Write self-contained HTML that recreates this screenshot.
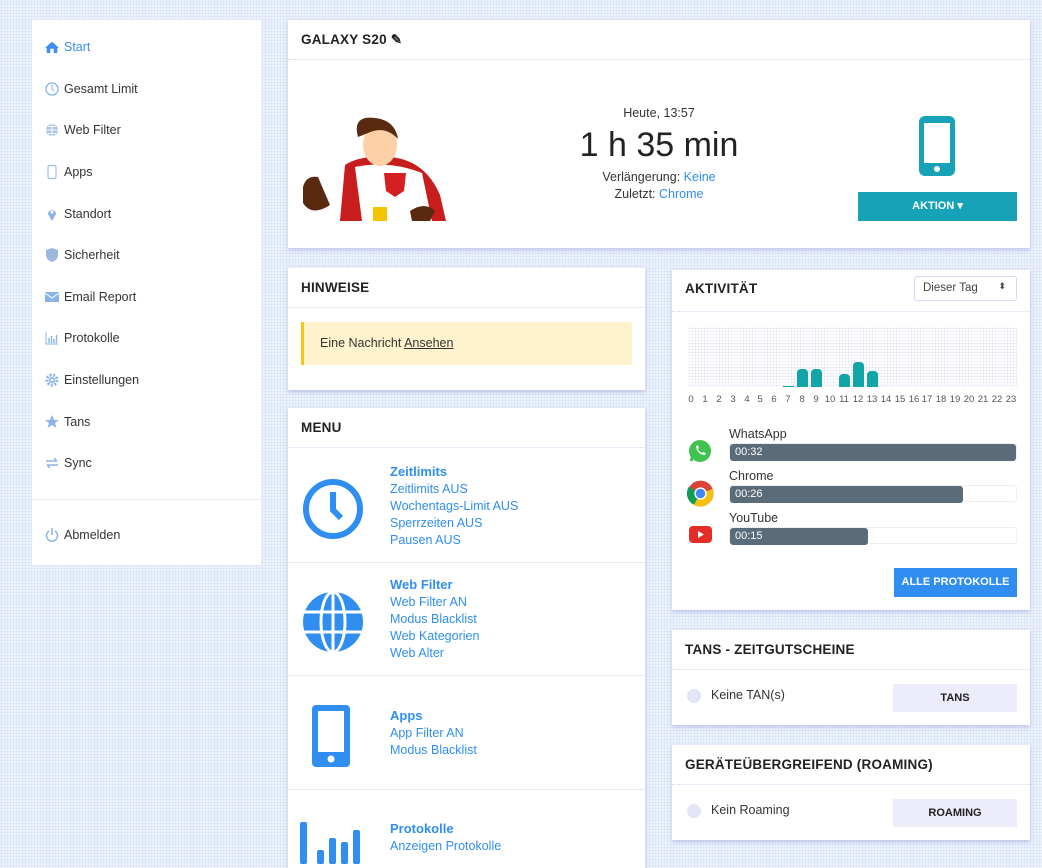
<!DOCTYPE html>
<html><head><meta charset="utf-8"><style>
*{box-sizing:border-box;margin:0;padding:0}
body{width:1042px;height:861px;overflow:hidden;position:relative;font-family:"Liberation Sans",sans-serif;background:#edf2fb;background-image:radial-gradient(#d5e1f7 0.8px,transparent 0.9px);background-size:3px 3px;color:#333}
.card{position:absolute;background:#fff;box-shadow:0 2px 4px rgba(120,120,200,.35)}
.hd{height:40px;border-bottom:1px dotted #d6d6ee;font-weight:bold;font-size:13.5px;letter-spacing:.2px;color:#222;padding:12px 13px}
.side{position:absolute;left:32px;top:20px;width:229px;height:545px;background:#fff}
.si{position:absolute;left:13px;font-size:12.5px;color:#333;display:flex;align-items:center;gap:5px}
.si svg{width:14px;height:14px}
a{color:#2f8ef0;text-decoration:none}
.btn{position:absolute;color:#fff;font-weight:bold;font-size:11px;text-align:center}
.mi{position:absolute;left:102px;font-size:12.5px;line-height:17px;color:#2f8ef0}
.mi b{font-size:13px}
.bar{position:absolute;background:#12a5a8;border-radius:4px 4px 0 0;width:11px}
.lbl{position:absolute;top:394px;font-size:9.5px;color:#555;width:14px;text-align:center}
.pb{position:absolute;left:729px;width:288px;height:17px;border:1px dotted #ddd;border-radius:3px}
.pb div{height:17px;background:#5a6c7a;border-radius:3px;color:#fff;font-size:11px;padding:2px 5px}
.an{position:absolute;left:729px;font-size:12.5px;color:#333}
.dot{position:absolute;width:14px;height:14px;border-radius:50%;background:#e4e4f8}
.gb{position:absolute;left:893px;width:124px;height:28px;background:#ececfb;font-size:11px;font-weight:bold;color:#222;text-align:center;line-height:28px}
</style></head><body>
<div class="side">
<div class="si" style="top:20px;color:#3d8ef0"><svg viewBox="0 0 16 14"><path d="M8 1L0 8h2v6h4V9h4v5h4V8h2z" fill="#3d8ef0"/></svg>Start</div>
<div class="si" style="top:62px"><svg viewBox="0 0 14 14"><circle cx="7" cy="7" r="6" fill="none" stroke="#8ab4e8" stroke-width="1.3"/><path d="M7 3v4l2 2" stroke="#8ab4e8" fill="none"/></svg>Gesamt Limit</div>
<div class="si" style="top:103px"><svg viewBox="0 0 14 14"><circle cx="7" cy="7" r="6" fill="#a9c4ea"/><path d="M1 7h12M7 1v12M3 3.5h8M3 10.5h8" stroke="#fff"/></svg>Web Filter</div>
<div class="si" style="top:145px"><svg viewBox="0 0 14 14"><rect x="3" y="0.5" width="8" height="13" rx="1.5" fill="none" stroke="#8ab4e8"/></svg>Apps</div>
<div class="si" style="top:187px"><svg viewBox="0 0 14 14"><path d="M7 14L3 7a4 4 0 118 0z" fill="#8ab4e8"/><circle cx="7" cy="5" r="1.5" fill="#fff"/></svg>Standort</div>
<div class="si" style="top:228px"><svg viewBox="0 0 14 14"><path d="M7 0L1 2v5c0 4 3 6 6 7 3-1 6-3 6-7V2z" fill="#9ab8e0"/></svg>Sicherheit</div>
<div class="si" style="top:270px"><svg viewBox="0 0 14 14"><rect x="0" y="2" width="14" height="10" fill="#8ab4e8"/><path d="M0 3l7 5 7-5" stroke="#fff" fill="none"/></svg>Email Report</div>
<div class="si" style="top:311px"><svg viewBox="0 0 14 14"><path d="M1 1v12h12" stroke="#8ab4e8" fill="none"/><path d="M4 12V7M6.5 12V5M9 12V8M11.5 12V4" stroke="#8ab4e8" stroke-width="1.4"/></svg>Protokolle</div>
<div class="si" style="top:353px"><svg viewBox="0 0 14 14"><circle cx="7" cy="7" r="5" fill="none" stroke="#8ab4e8" stroke-width="3" stroke-dasharray="2 1.5"/><circle cx="7" cy="7" r="3" fill="#8ab4e8"/><circle cx="7" cy="7" r="1.3" fill="#fff"/></svg>Einstellungen</div>
<div class="si" style="top:395px"><svg viewBox="0 0 14 14"><path d="M7 0l2 5h5l-4 3 1.5 5L7 10l-4.5 3L4 8 0 5h5z" fill="#8ab4e8"/></svg>Tans</div>
<div class="si" style="top:436px"><svg viewBox="0 0 14 14"><path d="M1 5h11M9 2l3 3M13 9H2M5 12L2 9" stroke="#8ab4e8" stroke-width="1.4" fill="none"/></svg>Sync</div>
<div style="position:absolute;left:0;right:0;top:479px;border-top:1px dotted #d6d6ee"></div>
<div class="si" style="top:508px"><svg viewBox="0 0 14 14"><path d="M4 3a5.5 5.5 0 106 0" stroke="#8ab4e8" stroke-width="1.5" fill="none"/><path d="M7 0v7" stroke="#8ab4e8" stroke-width="1.5"/></svg>Abmelden</div>
</div>

<div class="card" style="left:288px;top:20px;width:742px;height:228px">
<div class="hd">GALAXY S20 ✎</div>
<svg style="position:absolute;left:12px;top:95px" width="146" height="106" viewBox="0 0 146 106">
<path d="M45 50 Q60 40 90 42 Q125 45 140 80 L146 106 L40 106 Z" fill="#c81d1d"/>
<path d="M55 52 Q90 45 122 58 L132 106 L62 106 Z" fill="#fff"/>
<path d="M84 58 L106 58 L104 76 L95 82 L86 76Z" fill="#d42020"/>
<rect x="73" y="92" width="14" height="14" fill="#f5c400"/>
<ellipse cx="80" cy="30" rx="17" ry="21" fill="#fdd0a8"/>
<path d="M58 22 Q52 0 75 3 Q95 5 98 24 Q85 10 68 18 Z" fill="#5a2a10"/>
<path d="M3 72 Q6 60 18 62 L30 90 Q12 102 3 88Z" fill="#5a2a10"/>
<path d="M110 96 Q125 86 135 96 L130 106 L112 106Z" fill="#5a2a10"/>
</svg>
<div style="position:absolute;left:0;right:0;top:86px;text-align:center;font-size:12.5px;color:#333">Heute, 13:57</div>
<div style="position:absolute;left:0;right:0;top:106px;text-align:center;font-size:34px;color:#222">1 h 35 min</div>
<div style="position:absolute;left:0;right:0;top:149px;text-align:center;font-size:12.5px;line-height:17px;color:#333">Verlängerung: <a>Keine</a><br>Zuletzt: <a>Chrome</a></div>
<svg style="position:absolute;left:629px;top:94px" width="40" height="64" viewBox="0 0 40 64"><rect x="2" y="2" width="36" height="60" rx="6" fill="#17a2b8"/><rect x="7" y="9" width="26" height="40" fill="#fff"/><circle cx="20" cy="55" r="3" fill="#fff"/></svg>
<div class="btn" style="left:570px;top:172px;width:159px;height:29px;background:#17a2b8;line-height:29px">AKTION ▾</div>
</div>

<div class="card" style="left:288px;top:268px;width:357px;height:122px">
<div class="hd">HINWEISE</div>
<div style="position:absolute;left:13px;top:54px;width:331px;height:43px;background:#fff3cd;border-left:3px solid #f5c518;font-size:12.5px;padding:14px 16px;color:#333">Eine Nachricht <u>Ansehen</u></div>
</div>

<div class="card" style="left:288px;top:408px;width:357px;height:460px">
<div class="hd">MENU</div>
<svg style="position:absolute;left:14px;top:70px" width="62" height="62" viewBox="0 0 62 62"><circle cx="31" cy="31" r="27" fill="none" stroke="#2f8ef0" stroke-width="6"/><path d="M31 14v18l8 8" stroke="#2f8ef0" stroke-width="6" fill="none"/></svg>
<div class="mi" style="top:55px"><b>Zeitlimits</b><br>Zeitlimits AUS<br>Wochentags-Limit AUS<br>Sperrzeiten AUS<br>Pausen AUS</div>
<div style="position:absolute;left:0;right:0;top:154px;border-top:1px dotted #d6d6ee"></div>
<svg style="position:absolute;left:14px;top:183px" width="62" height="62" viewBox="0 0 62 62"><circle cx="31" cy="31" r="30" fill="#2f8ef0"/><g stroke="#fff" stroke-width="3" fill="none"><ellipse cx="31" cy="31" rx="12" ry="30"/><path d="M31 0v62M0 21h62M0 41h62"/></g></svg>
<div class="mi" style="top:168px"><b>Web Filter</b><br>Web Filter AN<br>Modus Blacklist<br>Web Kategorien<br>Web Alter</div>
<div style="position:absolute;left:0;right:0;top:267px;border-top:1px dotted #d6d6ee"></div>
<svg style="position:absolute;left:22px;top:296px" width="42" height="64" viewBox="0 0 42 64"><rect x="2" y="1" width="38" height="62" rx="4" fill="#2f8ef0"/><rect x="8" y="7" width="26" height="41" fill="#fff"/><circle cx="21" cy="55" r="3.5" fill="#fff"/></svg>
<div class="mi" style="top:299px"><b>Apps</b><br>App Filter AN<br>Modus Blacklist</div>
<div style="position:absolute;left:0;right:0;top:381px;border-top:1px dotted #d6d6ee"></div>
<svg style="position:absolute;left:12px;top:414px" width="62" height="42" viewBox="0 0 62 42"><g fill="#2f8ef0"><rect x="0" y="0" width="7" height="42" rx="2"/><rect x="17" y="28" width="7" height="14" rx="2"/><rect x="29" y="16" width="7" height="26" rx="2"/><rect x="41" y="20" width="7" height="22" rx="2"/><rect x="53" y="8" width="7" height="34" rx="2"/></g></svg>
<div class="mi" style="top:412px"><b>Protokolle</b><br>Anzeigen Protokolle</div>
</div>

<div class="card" style="left:672px;top:270px;width:358px;height:340px">
<div class="hd" style="height:42px;padding-top:11px">AKTIVITÄT</div>
<div style="position:absolute;left:242px;top:6px;width:103px;height:25px;border:1px solid #d6d6f0;border-radius:3px;font-size:11.5px;padding:5px 8px;color:#444">Dieser Tag<span style="position:absolute;right:10px;top:4px;font-size:9px">⬍</span></div>
<div style="position:absolute;left:16px;top:57px;width:330px;height:60px;background-image:radial-gradient(#e6e6f6 0.8px,transparent 1px);background-size:3px 3px"></div>
</div>
<div style="position:absolute;left:783px;top:386px;width:11px;height:1px;background:#12a5a8"></div>
<div class="bar" style="left:797px;top:369px;height:18px"></div>
<div class="bar" style="left:811px;top:369px;height:18px"></div>
<div class="bar" style="left:839px;top:374px;height:13px"></div>
<div class="bar" style="left:853px;top:362px;height:25px"></div>
<div class="bar" style="left:867px;top:371px;height:16px"></div>
<div class="lbl" style="left:684px">0</div><div class="lbl" style="left:698px">1</div><div class="lbl" style="left:712px">2</div><div class="lbl" style="left:726px">3</div><div class="lbl" style="left:740px">4</div><div class="lbl" style="left:753px">5</div><div class="lbl" style="left:767px">6</div><div class="lbl" style="left:781px">7</div><div class="lbl" style="left:795px">8</div><div class="lbl" style="left:809px">9</div><div class="lbl" style="left:823px">10</div><div class="lbl" style="left:837px">11</div><div class="lbl" style="left:851px">12</div><div class="lbl" style="left:865px">13</div><div class="lbl" style="left:879px">14</div><div class="lbl" style="left:893px">15</div><div class="lbl" style="left:907px">16</div><div class="lbl" style="left:920px">17</div><div class="lbl" style="left:934px">18</div><div class="lbl" style="left:948px">19</div><div class="lbl" style="left:962px">20</div><div class="lbl" style="left:976px">21</div><div class="lbl" style="left:990px">22</div><div class="lbl" style="left:1004px">23</div>
<div class="an" style="top:427px">WhatsApp</div>
<div class="pb" style="top:443px"><div style="width:100%">00:32</div></div>
<div class="an" style="top:469px">Chrome</div>
<div class="pb" style="top:485px"><div style="width:233px">00:26</div></div>
<div class="an" style="top:511px">YouTube</div>
<div class="pb" style="top:527px"><div style="width:138px">00:15</div></div>
<svg style="position:absolute;left:688px;top:439px" width="24" height="24" viewBox="0 0 24 24"><circle cx="12" cy="12" r="11" fill="#3ec34f"/><path d="M3 22l2-5" stroke="#3ec34f" stroke-width="3"/><path d="M8 7c0 5 4 9 9 9l1-2-3-1-1 1c-2-1-3-2-4-4l1-1-1-3z" fill="#fff"/></svg>
<svg style="position:absolute;left:687px;top:480px" width="27" height="27" viewBox="0 0 24 24"><circle cx="12" cy="12" r="11.5" fill="#db4437"/><path d="M12 12L22.5 8A11.5 11.5 0 0 1 6 22z" fill="#f4c20d"/><path d="M12 12L6 22A11.5 11.5 0 0 1 1.5 6z" fill="#0f9d58"/><circle cx="12" cy="12" r="5.5" fill="#fff"/><circle cx="12" cy="12" r="4.2" fill="#4285f4"/></svg>
<svg style="position:absolute;left:689px;top:526px" width="23" height="17" viewBox="0 0 23 17"><rect width="23" height="17" rx="4" fill="#e52d27"/><path d="M9 5l6 3.5-6 3.5z" fill="#fff"/></svg>
<div class="btn" style="left:894px;top:568px;width:123px;height:29px;background:#2f8ef0;line-height:29px">ALLE PROTOKOLLE</div>

<div class="card" style="left:672px;top:630px;width:358px;height:95px">
<div class="hd">TANS - ZEITGUTSCHEINE</div>
<div class="dot" style="left:15px;top:59px"></div>
<div style="position:absolute;left:39px;top:58px;font-size:12.5px">Keine TAN(s)</div>
</div>
<div class="gb" style="top:684px">TANS</div>

<div class="card" style="left:672px;top:745px;width:358px;height:95px">
<div class="hd">GERÄTEÜBERGREIFEND (ROAMING)</div>
<div class="dot" style="left:15px;top:59px"></div>
<div style="position:absolute;left:39px;top:58px;font-size:12.5px">Kein Roaming</div>
</div>
<div class="gb" style="top:799px">ROAMING</div>
</body></html>
